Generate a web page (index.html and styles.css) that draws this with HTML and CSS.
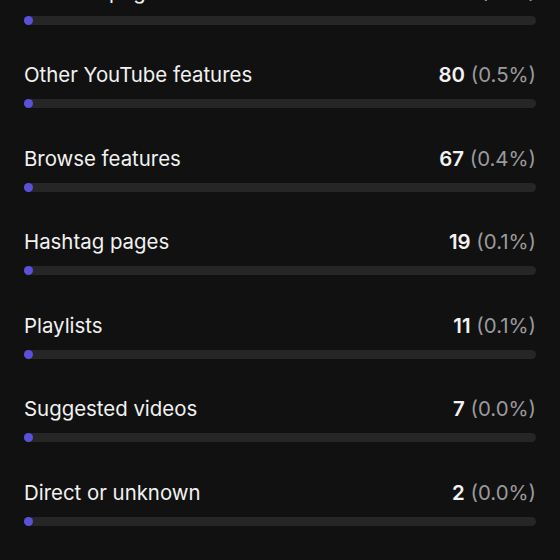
FILE: index.html
```html
<!DOCTYPE html>
<html>
<head>
  <title>Traffic sources</title>
  <link rel="stylesheet" href="styles.css">
</head>
<body>
  <div class="sources">
    <div class="source">
      <div class="source-head">
        <span class="label">Channel pages</span>
        <span class="stat"><b>164</b> <span class="pct">(1.1%)</span></span>
      </div>
      <div class="bar"><div class="fill"></div></div>
    </div>

    <div class="source">
      <div class="source-head">
        <span class="label">Other YouTube features</span>
        <span class="stat"><b>80</b> <span class="pct">(0.5%)</span></span>
      </div>
      <div class="bar"><div class="fill"></div></div>
    </div>

    <div class="source">
      <div class="source-head">
        <span class="label">Browse features</span>
        <span class="stat"><b>67</b> <span class="pct">(0.4%)</span></span>
      </div>
      <div class="bar"><div class="fill"></div></div>
    </div>

    <div class="source">
      <div class="source-head">
        <span class="label">Hashtag pages</span>
        <span class="stat"><b>19</b> <span class="pct">(0.1%)</span></span>
      </div>
      <div class="bar"><div class="fill"></div></div>
    </div>

    <div class="source">
      <div class="source-head">
        <span class="label">Playlists</span>
        <span class="stat"><b>11</b> <span class="pct">(0.1%)</span></span>
      </div>
      <div class="bar"><div class="fill"></div></div>
    </div>

    <div class="source">
      <div class="source-head">
        <span class="label">Suggested videos</span>
        <span class="stat"><b>7</b> <span class="pct">(0.0%)</span></span>
      </div>
      <div class="bar"><div class="fill"></div></div>
    </div>

    <div class="source">
      <div class="source-head">
        <span class="label">Direct or unknown</span>
        <span class="stat"><b>2</b> <span class="pct">(0.0%)</span></span>
      </div>
      <div class="bar"><div class="fill"></div></div>
    </div>
  </div>
</body>
</html>
```

FILE: styles.css
```css
body {
  margin: 0;
  background-color: #111111;
  color: #f2f2f2;
  font-family: Inter, "Noto Sans", sans-serif;
  overflow: hidden;
}

.sources {
  margin-top: -21.5px;
  padding: 0 24px;
}

.source {
  height: 83.5px;
  display: flex;
  flex-direction: column;
}

.source-head {
  display: flex;
  justify-content: space-between;
  align-items: center;
  height: 24px;
  padding-top: 1px;
  font-size: 20.4px;
  line-height: 24px;
}

.stat b {
  font-weight: 600;
}

.pct {
  color: #9a9a9e;
}

.bar {
  margin-top: 12px;
  height: 9px;
  border-radius: 5px;
  background-color: #262626;
}

.fill {
  width: 9px;
  height: 9px;
  border-radius: 50%;
  background-color: #5b50dc;
}
```
